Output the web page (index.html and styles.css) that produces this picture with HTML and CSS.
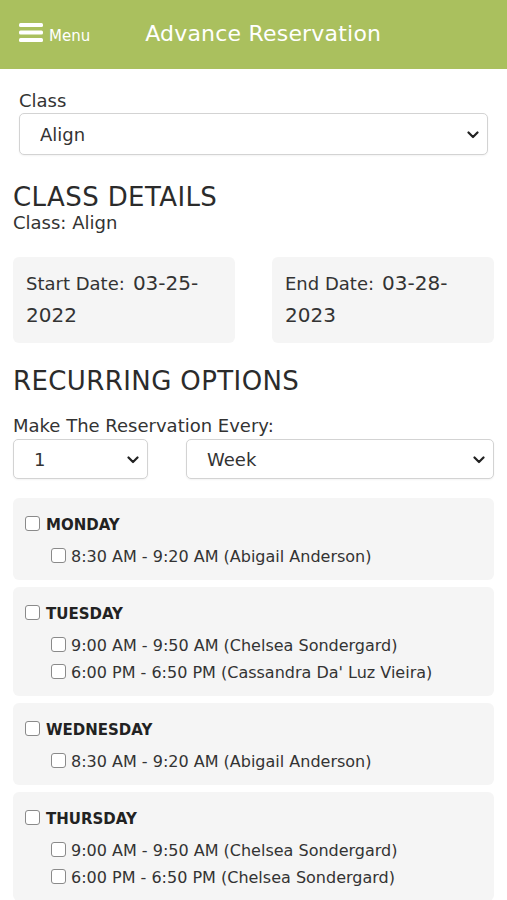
FILE: index.html
```html
<!DOCTYPE html>
<html lang="en">
<head>
  <meta charset="UTF-8">
  <meta name="viewport" content="width=device-width, initial-scale=1.0">
  <title>Advance Reservation</title>
  <link rel="stylesheet" href="styles.css">
</head>
<body>

  <header class="topbar">
    <button class="menu-btn" type="button">
      <svg class="menu-icon" width="24" height="20" viewBox="0 0 24 20">
        <rect x="0" y="0" width="24" height="4" rx="1.5" fill="#fff"/>
        <rect x="0" y="7.5" width="24" height="4" rx="1.5" fill="#fff"/>
        <rect x="0" y="15" width="24" height="4" rx="1.5" fill="#fff"/>
      </svg>
      <span>Menu</span>
    </button>
    <h1 class="page-title">Advance Reservation</h1>
  </header>

  <main class="content">
    <div class="field class-field">
      <label for="classSelect">Class</label>
      <div class="select-wrap">
        <select id="classSelect" class="select">
          <option>Align</option>
        </select>
        <svg class="chevron" width="12" height="8" viewBox="0 0 12 8"><path d="M1.5 1.5 6 6l4.5-4.5" fill="none" stroke="#222" stroke-width="2.2" stroke-linecap="round" stroke-linejoin="round"/></svg>
      </div>
    </div>

    <h2 class="section-title details-title">CLASS DETAILS</h2>
    <p class="class-name">Class: Align</p>

    <div class="date-grid">
      <div class="date-card"><span class="date-label">Start Date:</span> <span class="date-value">03-25-<br>2022</span></div>
      <div class="date-card"><span class="date-label">End Date:</span> <span class="date-value">03-28-<br>2023</span></div>
    </div>

    <h2 class="section-title recurring-title">RECURRING OPTIONS</h2>
    <p class="every-label">Make The Reservation Every:</p>
    <div class="every-row">
      <div class="select-wrap">
        <select class="select select-sm">
          <option>1</option>
          <option>2</option>
          <option>3</option>
        </select>
        <svg class="chevron" width="12" height="8" viewBox="0 0 12 8"><path d="M1.5 1.5 6 6l4.5-4.5" fill="none" stroke="#222" stroke-width="2.2" stroke-linecap="round" stroke-linejoin="round"/></svg>
      </div>
      <div class="select-wrap">
        <select class="select select-sm">
          <option>Week</option>
          <option>Month</option>
        </select>
        <svg class="chevron" width="12" height="8" viewBox="0 0 12 8"><path d="M1.5 1.5 6 6l4.5-4.5" fill="none" stroke="#222" stroke-width="2.2" stroke-linecap="round" stroke-linejoin="round"/></svg>
      </div>
    </div>

    <div class="days">
      <div class="day-card">
        <label class="day-head"><input type="checkbox"> MONDAY</label>
        <div class="slots">
          <label class="slot"><input type="checkbox"> 8:30 AM - 9:20 AM (Abigail Anderson)</label>
        </div>
      </div>

      <div class="day-card">
        <label class="day-head"><input type="checkbox"> TUESDAY</label>
        <div class="slots">
          <label class="slot"><input type="checkbox"> 9:00 AM - 9:50 AM (Chelsea Sondergard)</label>
          <label class="slot"><input type="checkbox"> 6:00 PM - 6:50 PM (Cassandra Da' Luz Vieira)</label>
        </div>
      </div>

      <div class="day-card">
        <label class="day-head"><input type="checkbox"> WEDNESDAY</label>
        <div class="slots">
          <label class="slot"><input type="checkbox"> 8:30 AM - 9:20 AM (Abigail Anderson)</label>
        </div>
      </div>

      <div class="day-card">
        <label class="day-head"><input type="checkbox"> THURSDAY</label>
        <div class="slots">
          <label class="slot"><input type="checkbox"> 9:00 AM - 9:50 AM (Chelsea Sondergard)</label>
          <label class="slot"><input type="checkbox"> 6:00 PM - 6:50 PM (Chelsea Sondergard)</label>
        </div>
      </div>
    </div>
  </main>

</body>
</html>
```

FILE: styles.css
```css
body {
  margin: 0;
  font-family: "DejaVu Sans", sans-serif;
  color: #333;
  background-color: #fff;
}
.topbar {
  height: 69px;
  background-color: #aac05e;
  display: flex;
  align-items: center;
  padding: 0 0 3px 19px;
  box-sizing: border-box;
  color: #fff;
}
.menu-btn {
  display: flex;
  align-items: center;
  gap: 6px;
  background: none;
  border: none;
  padding: 0;
  color: #fff;
  font-family: inherit;
  font-size: 15px;
  cursor: pointer;
}
.menu-btn span {
  margin-top: 5px;
}
.page-title {
  margin: 0 0 0 55px;
  font-size: 22px;
  font-weight: normal;
  letter-spacing: 0.2px;
}
.content {
  padding: 0 13px;
}
.field label {
  display: block;
  font-size: 18px;
  line-height: 22px;
  margin-bottom: 1px;
}
.class-field {
  margin: 21px 6px 0;
}
.select-wrap {
  position: relative;
}
.select {
  display: block;
  width: 100%;
  height: 42px;
  padding: 0 36px 0 20px;
  border: 1px solid #d3d3d3;
  border-radius: 5px;
  background-color: #fff;
  font-family: inherit;
  font-size: 18px;
  color: #333;
  appearance: none;
  -webkit-appearance: none;
  box-shadow: 0 1px 2px rgba(0, 0, 0, 0.05);
}
.select-sm {
  height: 40px;
}
.chevron {
  position: absolute;
  right: 9px;
  top: 50%;
  margin-top: -3px;
  pointer-events: none;
}
.section-title {
  margin: 0;
  font-size: 26px;
  line-height: 30px;
  font-weight: normal;
  letter-spacing: 0.4px;
  color: #2b2b2b;
}
.details-title {
  margin-top: 27px;
}
.class-name {
  margin: 0;
  font-size: 18px;
  line-height: 22px;
}
.date-grid {
  display: grid;
  grid-template-columns: 1fr 1fr;
  gap: 37px;
  margin-top: 23px;
}
.date-card {
  background-color: #f5f5f5;
  border-radius: 6px;
  padding: 11px 13px;
  line-height: 31px;
}
.date-label {
  font-size: 18px;
}
.date-value {
  font-size: 20px;
  margin-left: 3px;
}
.recurring-title {
  margin-top: 23px;
}
.every-label {
  margin: 19px 0 2px;
  font-size: 18px;
  line-height: 22px;
}
.every-row {
  display: grid;
  grid-template-columns: 135px 1fr;
  gap: 38px;
}
.days {
  margin-top: 19px;
  display: flex;
  flex-direction: column;
  gap: 7px;
}
.day-card {
  background-color: #f5f5f5;
  border-radius: 6px;
  padding: 14px 12px 10px;
}
.day-head {
  display: flex;
  align-items: center;
  gap: 6px;
  height: 26px;
  font-size: 15px;
  font-weight: bold;
  color: #222;
}
.slots {
  margin-top: 5px;
  padding-left: 26px;
}
.slot {
  display: flex;
  align-items: center;
  gap: 5px;
  height: 27px;
  font-size: 16px;
  color: #333;
}
input[type="checkbox"] {
  appearance: none;
  -webkit-appearance: none;
  box-sizing: border-box;
  width: 15px;
  height: 15px;
  margin: -3px 0 0;
  border: 1px solid #8a8a8a;
  border-radius: 3px;
  background-color: #fff;
  flex-shrink: 0;
}
```
